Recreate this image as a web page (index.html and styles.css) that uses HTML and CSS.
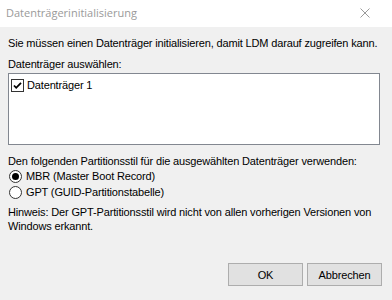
FILE: index.html
```html
<!DOCTYPE html>
<html>
<head>
<meta charset="utf-8">
<link rel="stylesheet" href="styles.css">
</head>
<body>
<div class="dialog">
  <div class="titlebar">
    <span class="title">Datenträgerinitialisierung</span>
    <svg class="close" width="10" height="10" viewBox="0 0 10 10"><path d="M0.5 0.5 L9.5 9.5 M9.5 0.5 L0.5 9.5" stroke="#9a9a9a" stroke-width="1" fill="none"/></svg>
  </div>
  <div class="content">
    <p class="line first">Sie müssen einen Datenträger initialisieren, damit LDM darauf zugreifen kann.</p>
    <p class="line label">Datenträger auswählen:</p>
    <div class="listbox">
      <div class="item">
        <svg class="check" width="13" height="13" viewBox="0 0 13 13"><rect x="0.5" y="0.5" width="12" height="12" fill="#fff" stroke="#333"/><path d="M3 6.5 L5.2 8.8 L10 3.8" stroke="#000" stroke-width="1.8" fill="none"/></svg>
        <span>Datenträger 1</span>
      </div>
    </div>
    <p class="line style">Den folgenden Partitionsstil für die ausgewählten Datenträger verwenden:</p>
    <div class="radio">
      <svg width="13" height="13" viewBox="0 0 13 13"><circle cx="6.5" cy="6.5" r="6" fill="#fff" stroke="#333"/><circle cx="6.5" cy="6.5" r="3.5" fill="#000"/></svg>
      <span>MBR (Master Boot Record)</span>
    </div>
    <div class="radio">
      <svg width="13" height="13" viewBox="0 0 13 13"><circle cx="6.5" cy="6.5" r="6" fill="#fff" stroke="#333"/></svg>
      <span>GPT (GUID-Partitionstabelle)</span>
    </div>
    <p class="note">Hinweis: Der GPT-Partitionsstil wird nicht von allen vorherigen Versionen von Windows erkannt.</p>
    <div class="buttons">
      <button class="btn">OK</button>
      <button class="btn">Abbrechen</button>
    </div>
  </div>
</div>
</body>
</html>
```
FILE: styles.css
```css
html, body {
  margin: 0;
  padding: 0;
  background: #f0f0f0;
}
.dialog {
  width: 392px;
  height: 300px;
  font-family: "Liberation Sans", Arial, sans-serif;
  font-size: 11px;
  letter-spacing: -0.15px;
  color: #000;
}
.titlebar {
  height: 27px;
  background: #fff;
  display: flex;
  align-items: center;
  justify-content: space-between;
  padding: 0 22px 0 6px;
}
.title {
  font-family: "Open Sans", "Noto Sans", sans-serif;
  font-size: 11px;
  letter-spacing: 0;
  color: #9a9a9a;
  margin-top: -2px;
}
.close {
  display: block;
  margin-top: -2px;
}
.content {
  padding: 0 12px 0 8px;
}
.line {
  margin: 0;
  line-height: 13px;
}
.first {
  padding-top: 10px;
}
.label {
  margin-top: 8px;
}
.listbox {
  margin-top: 2px;
  height: 70px;
  background: #fff;
  border: 1px solid #828790;
}
.item {
  display: flex;
  align-items: center;
  gap: 3px;
  padding: 5px 0 0 2px;
  line-height: 13px;
}
.check {
  display: block;
}
.style {
  margin-top: 10px;
}
.radio {
  display: flex;
  align-items: center;
  gap: 4px;
  height: 16px;
  margin-left: 1px;
}
.radio svg {
  display: block;
}
.radio:first-of-type {
  margin-top: 7px;
}
.note {
  margin: 5px 0 0 0;
  line-height: 14px;
}
.buttons {
  display: flex;
  justify-content: flex-end;
  gap: 4px;
  margin-top: 30px;
  margin-right: -2px;
}
.btn {
  width: 75px;
  height: 23px;
  background: #e1e1e1;
  border: 1px solid #adadad;
  font-family: "Liberation Sans", Arial, sans-serif;
  font-size: 11px;
  letter-spacing: -0.15px;
  color: #000;
  padding: 0;
}
```
